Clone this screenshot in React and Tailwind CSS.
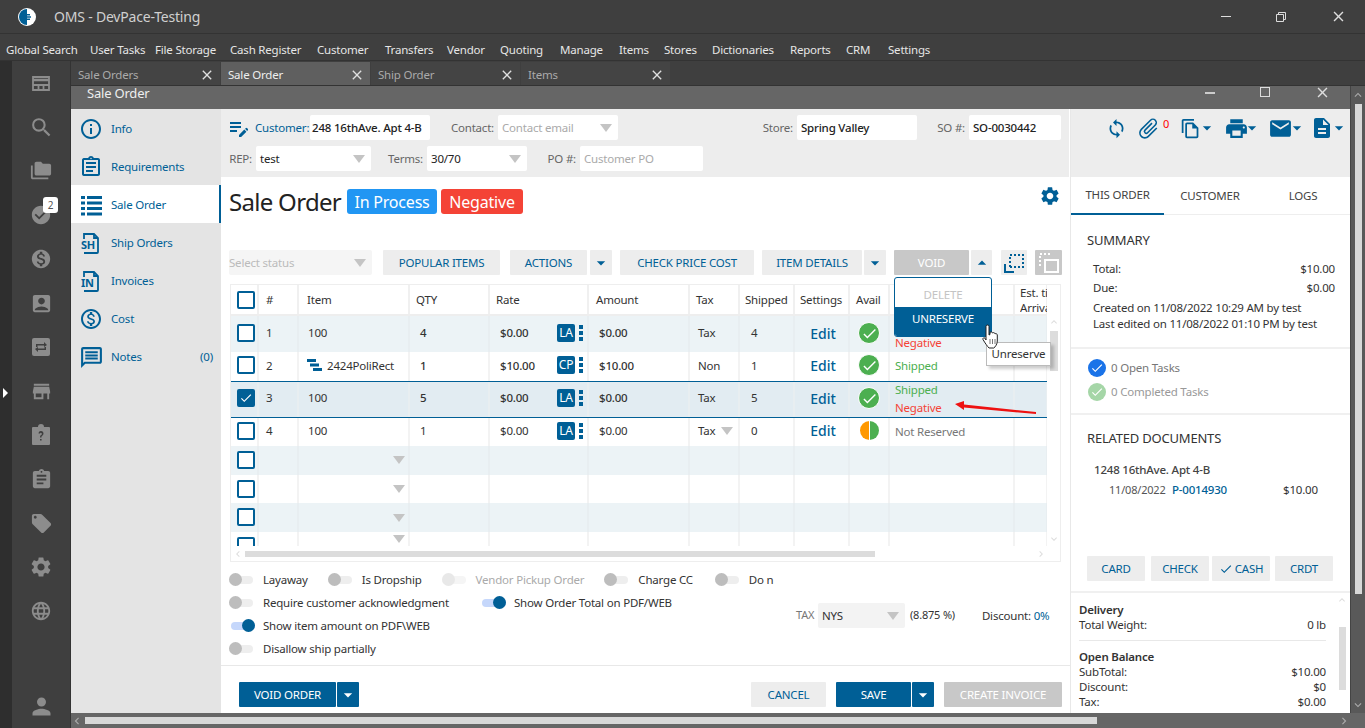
import React from 'react';
import { MdSearch, MdFolderCopy, MdCheckCircle, MdMonetizationOn, MdAccountBox, MdStore, MdAssignment, MdLocalOffer, MdSettings, MdLanguage, MdPerson, MdInfoOutline, MdOutlineAssignment, MdOutlineMonetizationOn, MdOutlineMessage, MdEditNote, MdAttachFile, MdOutlineFileCopy, MdPrint, MdEmail, MdDescription, MdCheck, MdArrowDropDown, MdArrowDropUp, MdClose, MdChevronLeft, MdChevronRight, MdExpandLess, MdExpandMore, MdOutlineSync } from 'react-icons/md';

const BLUE = 'text-[#005f96]';

function Caret({ className = '' }) {
  return <span className={`w-0 h-0 border-l-[6px] border-r-[6px] border-t-[8px] border-l-transparent border-r-transparent border-t-[#c4c4c4] ${className}`} />;
}

const menus = [
  ['Global Search', 'w-[84px]'], ['User Tasks', 'w-[65px]'], ['File Storage', 'w-[75px]'], ['Cash Register', 'w-[87px]'], ['Customer', 'w-[68px]'],
  ['Transfers', 'w-[62px]'], ['Vendor', 'w-[53px]'], ['Quoting', 'w-[60px]'], ['Manage', 'w-[59px]'], ['Items', 'w-[45px]'],
  ['Stores', 'w-[48px]'], ['Dictionaries', 'w-[78px]'], ['Reports', 'w-[56px]'], ['CRM', 'w-[42px]'], ['Settings', 'w-[50px]'],
];

function DashIcon() {
  return (
    <svg width="18" height="15" viewBox="0 0 18 15" fill="none" stroke="#8c8c8c" strokeWidth="1.800">
      <path d="M1 1h16v13H1z" fill="none" />
      <path d="M1 4h16" strokeWidth="2.500" />
      <path d="M1 9h16M6.500 9v5M11.500 9v5" />
    </svg>
  );
}

function TransferIcon() {
  return (
    <svg width="20" height="20" viewBox="0 0 20 20" fill="#8c8c8c">
      <rect x="1" y="1" width="18" height="18" rx="2" />
      <path d="M5 7h8V5l3 3-3 2V8.500H6.500V10H5zM15 13H7v2l-3-3 3-2v1.500h6.500V10H15z" fill="#3f3f3f" />
    </svg>
  );
}

function QuestionIcon() {
  return (
    <svg width="20" height="22" viewBox="0 0 20 22" fill="#8c8c8c">
      <path d="M2 3h5a3 3 0 0 1 6 0h5a1 1 0 0 1 1 1v16a1 1 0 0 1-1 1H2a1 1 0 0 1-1-1V4a1 1 0 0 1 1-1z" />
      <path d="M7.500 9.500a2.500 2.500 0 1 1 4 2c-.8.6-1 1-1 2h-1.500c0-1.500.5-2 1.300-2.700a1 1 0 1 0-1.300-1.300zM9 15h1.600v1.600H9z" fill="#3f3f3f" />
    </svg>
  );
}

function Rail() {
  const cls = 'text-[#8c8c8c]';
  const items = [
    <DashIcon />, <MdSearch size={25} className={cls} />, <MdFolderCopy size={22} className={cls} />,
    <div className="relative">
      <MdCheckCircle size={22} className={cls} />
      <span className="absolute left-[13px] -top-[7px] w-[15px] h-[16px] rounded-[3px] bg-white text-[#555] text-[10px] leading-[16px] text-center">2</span>
    </div>,
    <MdMonetizationOn size={22} className={cls} />, <MdAccountBox size={23} className={cls} />, <TransferIcon />, <MdStore size={23} className={cls} />,
    <QuestionIcon />, <MdAssignment size={23} className={cls} />, <MdLocalOffer size={23} className={cls} />, <MdSettings size={24} className={cls} />, <MdLanguage size={22} className={cls} />,
  ];
  return (
    <div className="w-[71px] shrink-0 flex border-r border-[#333] bg-[#3f3f3f]">
      <div className="w-[12px] bg-[#2e2e2e] relative flex items-center">
        <span className="absolute left-[3px] top-[327px] w-0 h-0 border-t-[5px] border-b-[5px] border-l-[5px] border-t-transparent border-b-transparent border-l-white" />
      </div>
      <div className="flex-1 flex flex-col items-center">
        {items.map((x, i) => <div key={i} className="h-[44px] flex items-center justify-center">{x}</div>)}
        <div className="h-[44px] flex items-center justify-center mt-auto"><MdPerson size={27} className={cls} /></div>
      </div>
    </div>
  );
}

function DocLabel({ t }) {
  return (
    <svg width="20" height="22" viewBox="0 0 20 22" fill="none" stroke="#005f96" strokeWidth="1.800">
      <path d="M3 7V2h10l4 4v14a1 1 0 0 1-1 1H3" />
      <path d="M13 2v4h4" />
      <text x="0" y="17" fontSize="11" fontWeight="700" fill="#005f96" stroke="none" fontFamily="Noto Sans">{t}</text>
    </svg>
  );
}

function ListIcon() {
  return (
    <svg width="21" height="21" viewBox="0 0 21 21" fill="#005f96">
      <rect x="0" y="1" width="4" height="3" /><rect x="6" y="1" width="15" height="3" />
      <rect x="0" y="6.500" width="4" height="3" /><rect x="6" y="6.500" width="15" height="3" />
      <rect x="0" y="12" width="4" height="3" /><rect x="6" y="12" width="15" height="3" />
      <rect x="0" y="17.500" width="4" height="3" /><rect x="6" y="17.500" width="15" height="3" />
    </svg>
  );
}

function Nav() {
  const items = [
    [<MdInfoOutline size={24} />, 'Info'],
    [<MdOutlineAssignment size={24} />, 'Requirements'],
    [<ListIcon />, 'Sale Order', true],
    [<DocLabel t="SH" />, 'Ship Orders'],
    [<DocLabel t="IN" />, 'Invoices'],
    [<MdOutlineMonetizationOn size={24} />, 'Cost'],
    [<MdOutlineMessage size={25} />, 'Notes'],
  ];
  return (
    <div className="w-[150px] shrink-0 bg-[#e4e4e4]">
      {items.map(([ic, t, active]) => (
        <div key={t} className={`h-[38px] pt-[2px] flex items-center pl-[6px] ${BLUE} ${active ? 'bg-white border-r-2 border-[#005f96]' : ''}`}>
          <div className="w-[28px] flex justify-center">{ic}</div>
          <span className="ml-[6px] flex-1">{t}</span>
          {t === 'Notes' && <span className="mr-[8px]">(0)</span>}
        </div>
      ))}
    </div>
  );
}

function Field({ label, w, value, ph, caret, lc = 'text-[#666]', lw, bold }) {
  return (
    <div className="flex items-center">
      <span className={`${lw} ${lc} text-right pr-[4px]`}>{label}</span>
      <div className={`${w} h-[25px] bg-white rounded-[2px] flex items-center justify-between px-[4px] ${ph ? 'text-[#aaa]' : 'text-[#222]'} ${bold ? 'font-medium' : ''}`}>
        <span>{value}</span>
        {caret && <Caret className="mr-[2px]" />}
      </div>
    </div>
  );
}

function TopBar() {
  return (
    <div className="h-[68px] bg-[#ededed] pt-[6px] pl-[8px] flex flex-col gap-[6px] shrink-0 border-r border-white">
      <div className="flex items-center h-[25px]">
        <MdEditNote size={24} className={`${BLUE} -ml-[2px]`} />
        <span className={`${BLUE} ml-[2px] w-[57px] pl-[2px]`}>Customer:</span>
        <div className="w-[120px] h-[25px] bg-white rounded-[2px] flex items-center pl-[2px] font-medium text-[#222] overflow-hidden whitespace-nowrap">248 16thAve. Apt 4-B</div>
        <Field label="Contact:" lw="w-[68px]" w="w-[120px]" value="Contact email" ph caret />
        <Field label="Store:" lw="w-[179px]" w="w-[120px]" value="Spring Valley" bold />
        <Field label="SO #:" lw="w-[52px]" w="w-[92px]" value="SO-0030442" bold />
      </div>
      <div className="flex items-center h-[25px]">
        <Field label="REP:" lw="w-[27px]" w="w-[115px]" value="test" caret />
        <Field label="Terms:" lw="w-[56px]" w="w-[100px]" value="30/70" caret />
        <Field label="PO #:" lw="w-[53px]" w="w-[123px]" value="Customer PO" ph />
      </div>
    </div>
  );
}

function Btn({ w, children, cls = 'bg-[#ededed] text-[#005f96]', ml = '' }) {
  return <div className={`${w} ${ml} h-[25px] flex items-center justify-center rounded-[1px] ${cls}`}>{children}</div>;
}

function CaretBtn({ up, white, w = 'w-[22px]', ml = 'ml-[2px]', cls = 'bg-[#ededed]' }) {
  const c = white ? 'text-white' : 'text-[#005f96]';
  return <Btn w={w} ml={ml} cls={`${cls} ${c}`}>{up ? <MdArrowDropUp size={20} /> : <MdArrowDropDown size={20} />}</Btn>;
}

const COLS = 'grid grid-cols-[28px_40px_111px_80px_99px_101px_50px_55px_55px_40px_125px_33px]';

function Box({ checked }) {
  return (
    <span className={`w-[18px] h-[18px] rounded-[2px] border-2 border-[#005f96] flex items-center justify-center ${checked ? 'bg-[#005f96]' : 'bg-white'}`}>
      {checked && <MdCheck size={16} className="text-white" />}
    </span>
  );
}

function Cell({ children, cls = '', line = 'border-[#f0f0f0]' }) {
  return <div className={`flex items-center border-r-2 ${line} overflow-hidden whitespace-nowrap ${cls}`}>{children}</div>;
}

function Avail({ half }) {
  if (half) {
    return (
      <span className="w-[21px] h-[21px] rounded-full flex overflow-hidden border border-white">
        <span className="flex-1 bg-[#ff9800]" />
        <span className="w-px bg-white" />
        <span className="flex-1 bg-[#4caf50]" />
      </span>
    );
  }
  return <span className="w-[22px] h-[22px] rounded-full bg-[#4caf50] border border-white flex items-center justify-center"><MdCheck size={17} className="text-white" /></span>;
}

function Row({ n, item, lines, qty, rate, badge, amt, tax, ship, status, bg, h, sel, medium, taxCaret, half }) {
  const w = medium ? 'font-medium' : '';
  const line = bg === 'bg-white' ? 'border-[#f3f3f3]' : 'border-[#e8eef1]';
  const P = { line };
  return (
    <div className={`${COLS} ${h} ${bg} ${sel ? 'border-y border-[#005f96]' : ''}`}>
      <Cell {...P} cls="pl-[6px] pb-[2px]"><Box checked={sel} /></Cell>
      <Cell {...P} cls="pl-[7px] pb-[2px]">{n}</Cell>
      <Cell {...P} cls="pl-[9px] pb-[2px]">
        {lines && (
          <svg width="15" height="12" viewBox="0 0 15 12" className="mr-[5px] -ml-[1px]" fill="#005f96">
            <rect x="0" y="0" width="9" height="3" /><rect x="3" y="4.500" width="9" height="3" /><rect x="6" y="9" width="9" height="3" />
          </svg>
        )}
        {item}
      </Cell>
      <Cell {...P} cls={`pl-[10px] pb-[2px] ${w}`}>{qty}</Cell>
      <Cell {...P} cls={`pl-[10px] pb-[2px] ${w}`}>
        <span className="w-[57px]">{rate}</span>
        <span className="w-[18px] h-[18px] bg-[#005f96] text-white rounded-[2px] text-[12px] leading-[18px] text-center font-normal">{badge}</span>
        <span className="ml-[4px] flex flex-col gap-[2px]">
          <i className="block w-[4px] h-[4px] bg-[#005f96]" /><i className="block w-[4px] h-[4px] bg-[#005f96]" /><i className="block w-[4px] h-[4px] bg-[#005f96]" />
        </span>
      </Cell>
      <Cell {...P} cls={`pl-[10px] pb-[2px] ${w}`}>{amt}</Cell>
      <Cell {...P} cls="pl-[8px] pb-[2px] justify-between pr-[3px]">{tax}{taxCaret && <Caret className="mr-[2px]" />}</Cell>
      <Cell {...P} cls="pl-[11px] pb-[2px]">{ship}</Cell>
      <Cell {...P} cls="justify-center pl-[3px] pb-[2px]"><span className={`${BLUE} text-[14px] font-medium tracking-normal`}>Edit</span></Cell>
      <Cell {...P} cls="justify-center pb-[2px]"><Avail half={half} /></Cell>
      <Cell {...P} cls="pl-[5px]">
        <div className="flex flex-col leading-[18px]">
          {status.map(([t, c]) => <span key={t} className={c}>{t}</span>)}
        </div>
      </Cell>
      <Cell {...P} />
    </div>
  );
}

function EmptyRow({ bg, h = 'h-[29px]' }) {
  const line = bg === 'bg-white' ? 'border-[#f3f3f3]' : 'border-[#e8eef1]';
  return (
    <div className={`${COLS} ${h} ${bg}`}>
      <Cell line={line} cls="pl-[6px] items-start pt-[5px]"><Box /></Cell>
      <Cell line={line} />
      <Cell line={line} cls="justify-end pr-[3px]"><Caret /></Cell>
      {Array.from({ length: 9 }).map((_, i) => <Cell key={i} line={line} />)}
    </div>
  );
}

function Table() {
  const heads = ['#', 'Item', 'QTY', 'Rate', 'Amount', 'Tax', 'Shipped', 'Settings', 'Avail', '', ''];
  const pads = ['pl-[7px]', 'pl-[8px]', 'pl-[6px]', 'pl-[6px]', 'pl-[7px]', 'pl-[6px]', 'pl-[5px]', 'pl-[5px]', 'pl-[6px]', '', ''];
  return (
    <div className="ml-[9px] w-[831px] h-[278px] border border-[#eeeeee] flex flex-col shrink-0 text-[#333] relative">
      <div className="flex flex-1 min-h-0">
        <div className="w-[817px] flex flex-col overflow-hidden">
          <div className={`${COLS} h-[31px] shrink-0 border-b-2 border-[#eeeeee]`}>
            <Cell cls="pl-[6px]"><Box /></Cell>
            {heads.map((h, i) => <Cell key={i} cls={pads[i]}>{h}</Cell>)}
          </div>
          <Row n="1" item="100" qty="4" rate="$0.00" badge="LA" amt="$0.00" tax="Tax" ship="4" status={[['\u00A0', ''], ['Negative', 'text-[#f44336]']]} bg="bg-[#ecf3f6]" h="h-[36px]" medium />
          <Row n="2" item="2424PoliRect" lines qty="1" rate="$10.00" badge="CP" amt="$10.00" tax="Non" ship="1" status={[['Shipped', 'text-[#4caf50]']]} bg="bg-white" h="h-[29px]" medium />
          <Row n="3" item="100" qty="5" rate="$0.00" badge="LA" amt="$0.00" tax="Tax" ship="5" status={[['Shipped', 'text-[#4caf50]'], ['Negative', 'text-[#f44336]']]} bg="bg-[#e2ecf2]" h="h-[37px]" sel medium />
          <Row n="4" item="100" qty="1" rate="$0.00" badge="LA" amt="$0.00" tax="Tax" ship="0" status={[['Not Reserved', 'text-[#777]']]} bg="bg-white" h="h-[29px]" taxCaret half />
          <EmptyRow bg="bg-[#ecf3f6]" />
          <EmptyRow bg="bg-white" />
          <EmptyRow bg="bg-[#ecf3f6]" />
          <EmptyRow bg="bg-white" h="h-[14px]" />
        </div>
        <div className="w-[13px] flex flex-col items-center pt-[31px] border-l border-white">
          <MdExpandLess size={12} className="text-[#ddd]" />
          <div className="w-[8px] h-[40px] bg-[#dcdcdc] mt-[3px]" />
          <MdExpandMore size={12} className="text-[#ddd] mt-auto mb-[1px]" />
        </div>
      </div>
      <div className="h-[15px] shrink-0 flex items-center">
        <MdChevronLeft size={12} className="text-[#ddd] ml-[1px]" />
        <div className="ml-[1px] w-[630px] h-[6px] bg-[#dcdcdc]" />
        <MdChevronRight size={12} className="text-[#ddd] ml-auto mr-[13px]" />
      </div>
      <span className="absolute left-[789px] top-[-1px] w-[27px] h-[31px] pt-[1px] text-[#333] leading-[15px] overflow-hidden whitespace-nowrap">Est. ti<br />Arriva</span>
    </div>
  );
}

function Toggle({ on, faint, ml = '', label, lw }) {
  return (
    <div className={`flex items-center ${ml}`}>
      <span className={`relative w-[24px] h-[8px] rounded-full ${on ? 'bg-[#c5d7fb]' : faint ? 'bg-[#f5f5f5]' : 'bg-[#eeeeee]'}`}>
        <span className={`absolute top-[-3px] w-[13px] h-[13px] rounded-full ${on ? 'right-0 bg-[#005f96]' : faint ? 'left-0 bg-[#e8e8e8]' : 'left-0 bg-[#bdbdbd]'}`} />
      </span>
      <span className={`${lw} ${faint ? 'text-[#aaa]' : 'text-[#333]'} whitespace-nowrap`}>{label}</span>
    </div>
  );
}

function Options() {
  return (
    <div className="h-[104px] shrink-0 flex border-b border-[#e8e8e8] relative">
      <div className="flex flex-col pl-[8px] pt-[10px] gap-[7px]">
        <div className="flex h-[16px]">
          <Toggle label="Layaway" lw="ml-[10px]" />
          <Toggle label="Is Dropship" lw="ml-[10px]" ml="ml-[20px]" />
          <Toggle label="Vendor Pickup Order" lw="ml-[10px]" faint ml="ml-[20px]" />
          <Toggle label="Charge CC" lw="ml-[10px]" ml="ml-[20px]" />
          <Toggle label="Do n" lw="ml-[10px]" ml="ml-[22px]" />
        </div>
        <div className="flex h-[16px]">
          <Toggle label="Require customer acknowledgment" lw="ml-[10px] w-[219px]" />
          <Toggle label="Show Order Total on PDF/WEB" lw="ml-[8px]" on />
        </div>
        <div className="flex h-[16px] pl-[2px]"><Toggle label="Show item amount on PDF\WEB" lw="ml-[8px]" on /></div>
        <div className="flex h-[16px]"><Toggle label="Disallow ship partially" lw="ml-[10px]" /></div>
      </div>
      <div className="absolute left-[575px] top-[41px] flex items-center h-[25px]">
        <span className="text-[#777] text-[11px] w-[22px]">TAX</span>
        <div className="w-[87px] h-[25px] bg-[#f3f3f3] rounded-[2px] flex items-center justify-between px-[4px] text-[#333]">NYS<Caret className="mr-[2px]" /></div>
        <span className="ml-[5px] text-[#333] text-[11px]">(8.875 %)</span>
        <span className="ml-[27px] text-[#333]">Discount: <span className={BLUE}>0%</span></span>
      </div>
    </div>
  );
}

function Center() {
  return (
    <div className="w-[849px] shrink-0 flex flex-col bg-white relative">
      <TopBar />
      <div className="h-[73px] flex items-start pl-[8px] pt-[12px] shrink-0 relative">
        <span className="text-[24px] leading-[25px] text-[#222] w-[118px] whitespace-nowrap tracking-[-0.7px]">Sale Order</span>
        <span className="w-[90px] h-[25px] rounded-[3px] bg-[#2196f3] text-white text-[16px] font-normal flex items-center justify-center">In Process</span>
        <span className="w-[82px] h-[25px] ml-[4px] rounded-[3px] bg-[#f44336] text-white text-[16px] flex items-center justify-center">Negative</span>
        <MdSettings size={22} className={`${BLUE} ml-auto mr-[9px] -mt-[4px]`} />
      </div>
      <div className="flex items-center pl-[8px] h-[25px] shrink-0">
        <div className="w-[143px] h-[25px] bg-[#f5f5f5] rounded-[2px] text-[#bbb] flex items-center justify-between pr-[6px]">Select status<Caret /></div>
        <Btn w="w-[117px]" ml="ml-[11px]">POPULAR ITEMS</Btn>
        <Btn w="w-[77px]" ml="ml-[10px]">ACTIONS</Btn>
        <CaretBtn ml="ml-[3px]" />
        <Btn w="w-[134px]" ml="ml-[8px]">CHECK PRICE COST</Btn>
        <Btn w="w-[100px]" ml="ml-[8px]">ITEM DETAILS</Btn>
        <CaretBtn />
        <Btn w="w-[75px]" ml="ml-[8px]" cls="bg-[#c8c8c8] text-white">VOID</Btn>
        <CaretBtn up w="w-[21px]" cls="bg-[#ededed]" />
        <Btn w="w-[26px]" ml="ml-[9px]">
          <svg width="22" height="22" viewBox="0 0 22 22" fill="none" stroke="#005f96" strokeWidth="2">
            <path d="M2 12v8h9" /><path d="M7 15V3h13v12H7" strokeDasharray="2 2" />
          </svg>
        </Btn>
        <Btn w="w-[27px]" ml="ml-[8px]" cls="bg-[#c8c8c8]">
          <svg width="22" height="22" viewBox="0 0 22 22" fill="none" stroke="white" strokeWidth="2">
            <path d="M7 8h13v12H7z" /><path d="M2 14V2h12" strokeDasharray="2 2" />
          </svg>
        </Btn>
      </div>
      <div className="h-[9px] shrink-0" />
      <Table />
      <Options />
      <div className="flex items-center pl-[18px] pt-[16px]">
        <Btn w="w-[97px]" cls="bg-[#005f96] text-white">VOID ORDER</Btn>
        <CaretBtn white ml="ml-px" cls="bg-[#005f96]" />
        <Btn w="w-[75px]" ml="ml-[392px]">CANCEL</Btn>
        <Btn w="w-[75px]" ml="ml-[10px]" cls="bg-[#005f96] text-white">SAVE</Btn>
        <CaretBtn white ml="ml-px" cls="bg-[#005f96]" />
        <Btn w="w-[118px]" ml="ml-[10px]" cls="bg-[#c8c8c8] text-white">CREATE INVOICE</Btn>
      </div>

      <div className="absolute left-[673px] top-[168px] w-[98px] h-[60px] bg-white border border-[#005f96] rounded-[3px] overflow-hidden flex flex-col z-10">
        <div className="h-[30px] pt-[4px] flex items-center justify-center text-[#c4c4c4]">DELETE</div>
        <div className="h-[30px] pb-[5px] flex items-center justify-center bg-[#005f96] text-white">UNRESERVE</div>
      </div>
      <div className="absolute left-[765px] top-[233px] w-[65px] h-[24px] bg-white border border-[#bbb] shadow-[3px_3px_3px_rgba(0,0,0,0.2)] flex items-center justify-center text-[#333] z-10">Unreserve</div>
      <svg className="absolute left-[760px] top-[215px] z-20" width="20" height="26" viewBox="0 0 20 26">
        <path d="M5 2.500a1.500 1.500 0 0 1 3 0V11l1-.5V8.500c1-1 2.300-.6 2.500.5 1-.8 2.300-.3 2.500.8 1-.5 2 0 2.300 1V17c0 3-2 6-3.500 7H8c-1.500-1.500-4-5-6-8.500-.5-1.500 1-2.300 2-1.200L5 16z" fill="white" stroke="#222" strokeWidth="1" strokeLinejoin="round" />
        <path d="M9 15v5M11.500 15v5M14 15v5" stroke="#555" strokeWidth=".8" />
      </svg>
      <svg className="absolute left-[732px] top-[291px] z-20" width="85" height="16" viewBox="0 0 85 16">
        <path d="M2 4 L11 1 L11 4.500 L83 12 L83 14 L11 7.500 L11 10 Z" fill="#ee1111" />
      </svg>
    </div>
  );
}

function Kv({ k, v, cls = '' }) {
  return <div className={`flex justify-between ${cls}`}><span>{k}</span><span>{v}</span></div>;
}

function RightPanel() {
  return (
    <div className="flex-1 min-w-0 flex flex-col bg-white border-l border-[#e8e8e8] text-[#333]">
      <div className="h-[68px] bg-[#ededed] shrink-0 relative">
        <MdOutlineSync size={21} className={`${BLUE} absolute left-[35px] top-[9px]`} />
        <MdAttachFile size={25} className={`${BLUE} absolute left-[65px] top-[7px] rotate-45`} />
        <span className="absolute left-[92px] top-[7px] text-[11px] text-[#f00]">0</span>
        <MdOutlineFileCopy size={21} className={`${BLUE} absolute left-[109px] top-[9px]`} />
        <MdArrowDropDown size={20} className={`${BLUE} absolute left-[126px] top-[9px]`} />
        <MdPrint size={25} className={`${BLUE} absolute left-[153px] top-[7px]`} />
        <MdArrowDropDown size={20} className={`${BLUE} absolute left-[171px] top-[9px]`} />
        <MdEmail size={25} className={`${BLUE} absolute left-[197px] top-[7px]`} />
        <MdArrowDropDown size={20} className={`${BLUE} absolute left-[216px] top-[9px]`} />
        <MdDescription size={24} className={`${BLUE} absolute left-[239px] top-[7px]`} />
        <MdArrowDropDown size={20} className={`${BLUE} absolute left-[258px] top-[9px]`} />
      </div>
      <div className="h-[38px] shrink-0 flex border-b border-[#eeeeee] text-[#444]">
        <div className="w-[93px] flex items-center justify-center border-b-2 border-[#005f96] h-[38px]">THIS ORDER</div>
        <div className="w-[92px] flex items-center justify-center">CUSTOMER</div>
        <div className="w-[94px] flex items-center justify-center">LOGS</div>
      </div>
      <div className="h-[134px] shrink-0 px-[16px] border-b-2 border-[#f0f0f0] pt-[17px]">
        <div className="text-[13px] leading-[16px]">SUMMARY</div>
        <div className="mt-[13px] pl-[6px] -mr-[1px] leading-[16px]">
          <Kv k="Total:" v="$10.00" />
          <Kv k="Due:" v="$0.00" cls="mt-[3px]" />
          <div className="mt-[4px]">Created on 11/08/2022 10:29 AM by test</div>
          <div>Last edited on 11/08/2022 01:10 PM by test</div>
        </div>
      </div>
      <div className="h-[66px] shrink-0 px-[17px] pb-[2px] border-b-2 border-[#f0f0f0] flex flex-col justify-center gap-[6px]">
        <div className="flex items-center gap-[5px] text-[#777]"><span className="w-[18px] h-[18px] rounded-full bg-[#1a73e8] flex items-center justify-center"><MdCheck size={14} className="text-white" /></span>0 Open Tasks</div>
        <div className="flex items-center gap-[5px] text-[#999]"><span className="w-[18px] h-[18px] rounded-full bg-[#a5d6a7] flex items-center justify-center"><MdCheck size={14} className="text-white" /></span>0 Completed Tasks</div>
      </div>
      <div className="h-[132px] shrink-0 px-[16px] pt-[15px]">
        <div className="text-[13px] leading-[16px]">RELATED DOCUMENTS</div>
        <div className="mt-[15px] pl-[7px] font-medium text-[#444]">1248 16thAve. Apt 4-B</div>
        <div className="mt-[4px] pl-[22px] flex items-center leading-[16px]">
          <span className="w-[63px] text-[11px] text-[#555]">11/08/2022</span>
          <span className={`${BLUE} w-[111px] font-medium`}>P-0014930</span>
          <span>$10.00</span>
        </div>
      </div>
      <div className="h-[46px] shrink-0 flex items-start pl-[16px] pt-[9px] border-b-2 border-[#f0f0f0]">
        <Btn w="w-[58px]">CARD</Btn>
        <Btn w="w-[58px]" ml="ml-[6px]">CHECK</Btn>
        <Btn w="w-[58px]" ml="ml-[3px]"><MdCheck size={14} className="mr-[2px]" />CASH</Btn>
        <Btn w="w-[58px]" ml="ml-[5px]">CRDT</Btn>
      </div>
      <div className="flex-1 min-h-0 flex overflow-hidden">
        <div className="w-[247px] ml-[8px] pt-[9px] leading-[15px]">
          <div className="font-semibold text-[#333]">Delivery</div>
          <Kv k="Total Weight:" v="0 lb" />
          <div className="h-px bg-[#e8e8e8] my-[8px]" />
          <div className="font-semibold text-[#333]">Open Balance</div>
          <Kv k="SubTotal:" v="$10.00" />
          <Kv k="Discount:" v="$0" />
          <Kv k="Tax:" v="$0.00" />
          <Kv k="Total:" v="$10.00" />
        </div>
        <div className="flex flex-col items-center w-[14px] ml-[9px] pt-[1px]">
          <MdExpandLess size={12} className="text-[#ddd]" />
          <div className="w-[7px] h-[63px] bg-[#dcdcdc] mt-[21px]" />
        </div>
      </div>
    </div>
  );
}

export default function App() {
  return (
    <div className="w-[1365px] h-[728px] overflow-hidden flex flex-col bg-[#3f3f3f] text-[11.5px] tracking-[-0.2px]" style={{ fontFamily: '"Noto Sans", "Open Sans", sans-serif' }}>
      <div className="h-[34px] shrink-0 flex items-center border-b border-[#333] text-[#d0d0d0]">
        <svg width="18" height="18" viewBox="0 0 18 18" className="ml-[18px]">
          <circle cx="9" cy="9" r="9" fill="white" />
          <path d="M9 1a8 8 0 0 0 0 16z" fill="#005f96" />
          <path d="M5 6h7v1.500H5zM7 8.300h6v1.500H7zM5 10.600h7v1.500H5z" fill="#005f96" />
        </svg>
        <span className="ml-[18px] text-[14px] tracking-[-0.2px]">OMS - DevPace-Testing</span>
        <div className="ml-auto flex items-center">
          <span className="w-[10px] h-px bg-[#ddd] mr-[45px]" />
          <svg width="10" height="10" viewBox="0 0 10 10" fill="none" stroke="#ddd" className="mr-[44px]"><path d="M.500 2.500h7v7h-7z" /><path d="M2.500 2.500v-2h7v7h-2" /></svg>
          <MdClose size={17} className="text-[#ddd] mr-[18px]" />
        </div>
      </div>
      <div className="h-[27px] shrink-0 flex items-center pl-[6px] pt-[6px] text-[#e6e6e6] border-b border-[#333]">
        {menus.map(([t, c]) => <span key={t} className={`${c} whitespace-nowrap`}>{t}</span>)}
      </div>
      <div className="flex-1 flex min-h-0">
        <Rail />
        <div className="flex-1 min-w-0 flex flex-col">
          <div className="h-[24px] shrink-0 flex items-end">
            {[['Sale Orders', false], ['Sale Order', true], ['Ship Order', false], ['Items', false]].map(([t, a]) => (
              <div key={t} className={`w-[149px] mr-px h-[23px] pt-[2px] flex items-center justify-between pl-[7px] pr-[5px] ${a ? 'bg-[#5f5f5f] text-[#eee]' : 'bg-[#444] text-[#aaa]'}`}>
                <span>{t}</span><MdClose size={16} className="text-[#e0e0e0]" />
              </div>
            ))}
          </div>
          <div className="flex-1 min-h-0 flex flex-col border-t border-[#333] bg-[#666]">
            <div className="flex flex-1 min-h-0">
              <div className="w-[1279px] flex flex-col shrink-0">
                <div className="h-[23px] shrink-0 flex items-start pl-[16px] text-[#eee] text-[13px] leading-[14px] relative">
                  Sale Order
                  <span className="absolute left-[1134px] top-[6px] w-[10px] h-[2px] bg-[#ccc]" />
                  <span className="absolute left-[1189px] top-[1px] w-[10px] h-[10px] border border-[#ddd]" />
                  <MdClose size={17} className="absolute left-[1243px] -top-[2px] text-[#ddd]" />
                </div>
                <div className="flex flex-1 min-h-0 overflow-hidden">
                  <Nav />
                  <Center />
                  <RightPanel />
                </div>
              </div>
              <div className="flex-1 flex flex-col items-center border-l border-[#444] bg-[#595959] pt-[2px]">
                <MdExpandLess size={14} className="text-[#aaa]" />
                <div className="w-[7px] h-[490px] bg-[#d8d8d8] mt-[2px]" />
                <MdExpandMore size={14} className="text-[#aaa] mt-auto mb-[1px]" />
              </div>
            </div>
            <div className="h-[15px] shrink-0 flex items-center bg-[#666]">
              <MdChevronLeft size={14} className="text-[#aaa] ml-[-1px]" />
              <div className="ml-[1px] w-[1012px] h-[7px] bg-[#d8d8d8]" />
              <MdChevronRight size={14} className="text-[#aaa] ml-auto mr-[14px]" />
            </div>
          </div>
        </div>
      </div>
    </div>
  );
}
